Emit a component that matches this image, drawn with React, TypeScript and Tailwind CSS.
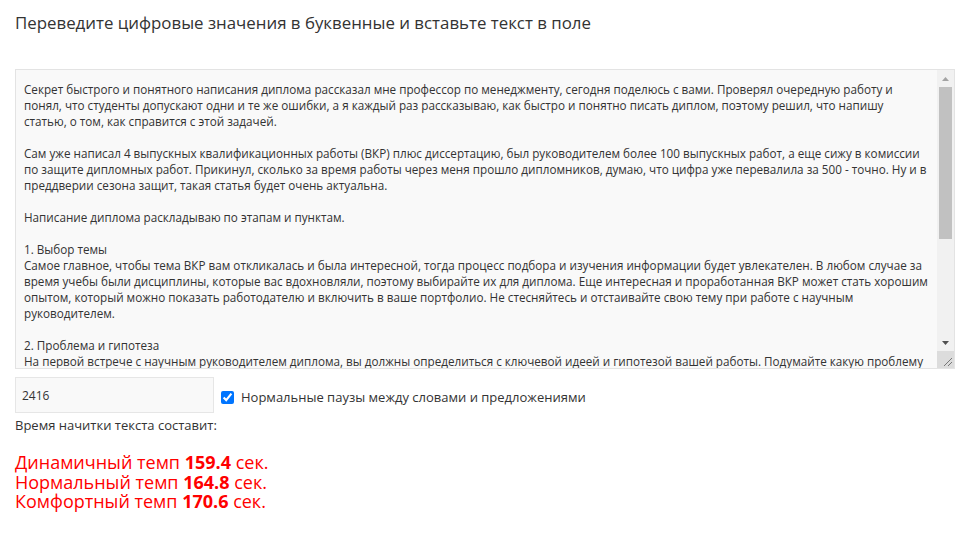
import React from 'react';

const articleText = `Секрет быстрого и понятного написания диплома рассказал мне профессор по менеджменту, сегодня поделюсь с вами. Проверял очередную работу и понял, что студенты допускают одни и те же ошибки, а я каждый раз рассказываю, как быстро и понятно писать диплом, поэтому решил, что напишу статью, о том, как справится с этой задачей.

Сам уже написал 4 выпускных квалификационных работы (ВКР) плюс диссертацию, был руководителем более 100 выпускных работ, а еще сижу в комиссии по защите дипломных работ. Прикинул, сколько за время работы через меня прошло дипломников, думаю, что цифра уже перевалила за 500 - точно. Ну и в преддверии сезона защит, такая статья будет очень актуальна.

Написание диплома раскладываю по этапам и пунктам.

1. Выбор темы
Самое главное, чтобы тема ВКР вам откликалась и была интересной, тогда процесс подбора и изучения информации будет увлекателен. В любом случае за время учебы были дисциплины, которые вас вдохновляли, поэтому выбирайте их для диплома. Еще интересная и проработанная ВКР может стать хорошим опытом, который можно показать работодателю и включить в ваше портфолио. Не стесняйтесь и отстаивайте свою тему при работе с научным руководителем.

2. Проблема и гипотеза
На первой встрече с научным руководителем диплома, вы должны определиться с ключевой идеей и гипотезой вашей работы. Подумайте какую проблему решает ваше исследование и почему она важна именно сейчас. Гипотеза должна быть проверяемой, а выводы в конце работы должны ее подтверждать или опровергать.

3. План работы
Составьте подробный план с главами и параграфами, согласуйте его с руководителем. Хороший план экономит время: вы точно знаете, какую информацию искать и в каком порядке ее излагать.

4. Подбор литературы
Используйте свежие источники за последние пять лет, учебники, научные статьи и нормативные документы. Сразу оформляйте список литературы по требованиям вуза, чтобы не тратить на это время в конце.`;

// Classic scrollbar drawn over the textarea's right edge
const FakeScrollbar = () => (
  <div className="pointer-events-none absolute top-px right-px bottom-px flex w-[17px] flex-col bg-[#f1f1f1]">
    <div className="flex h-[17px] items-center justify-center">
      <svg width="7" height="4" viewBox="0 0 7 4">
        <polygon points="3.5,0 7,4 0,4" fill="#a3a3a3" />
      </svg>
    </div>
    <div className="flex-1">
      <div className="mx-[2px] h-[152px] bg-[#c1c1c1]" />
    </div>
    <div className="flex h-[17px] items-center justify-center">
      <svg width="7" height="4" viewBox="0 0 7 4">
        <polygon points="0,0 7,0 3.5,4" fill="#505050" />
      </svg>
    </div>
    <div className="relative h-[17px] bg-[#dcdcdc]">
      <svg className="absolute right-[2px] bottom-[2px]" width="9" height="9" viewBox="0 0 9 9">
        <line x1="1" y1="9" x2="9" y2="1" stroke="#777" strokeWidth="1" />
        <line x1="5" y1="9" x2="9" y2="5" stroke="#777" strokeWidth="1" />
      </svg>
    </div>
  </div>
);

export default function App() {
  return (
    <div className="min-h-screen bg-white pl-[15px] pr-[17px] font-['Open_Sans',sans-serif] text-[#333]">
      <h1 className="pt-[11px] text-[16.85px] leading-6 font-normal">
        Переведите цифровые значения в буквенные и вставьте текст в поле
      </h1>

      <div className="relative mt-[34px] h-[300px]">
        <textarea
          defaultValue={articleText}
          className="block h-full w-full resize-none overflow-hidden border border-[#e3e3e3] bg-[#f9f9f9] py-[11px] pl-[8px] pr-[26px] text-[11.7px] leading-4 text-[#333] outline-none"
        />
        <FakeScrollbar />
      </div>

      <div className="mt-[8px] flex items-start">
        <input
          type="text"
          defaultValue="2416"
          className="h-[36px] w-[199px] border border-[#e6e6e6] bg-[#f9f9f9] px-[6px] text-[12px] text-[#333] outline-none"
        />
        <label className="ml-[7px] mt-[10px] flex items-center gap-[7px] text-[13px] leading-5">
          <input type="checkbox" defaultChecked className="m-0 h-[13px] w-[13px]" />
          Нормальные паузы между словами и предложениями
        </label>
      </div>

      <p className="mt-[3px] text-[13px] leading-[18px]">Время начитки текста составит:</p>

      <div className="mt-[19px] text-[18px] leading-[19.5px] text-[#ff0000]">
        <div>Динамичный темп <b>159.4</b> сек.</div>
        <div>Нормальный темп <b>164.8</b> сек.</div>
        <div>Комфортный темп <b>170.6</b> сек.</div>
      </div>
    </div>
  );
}
